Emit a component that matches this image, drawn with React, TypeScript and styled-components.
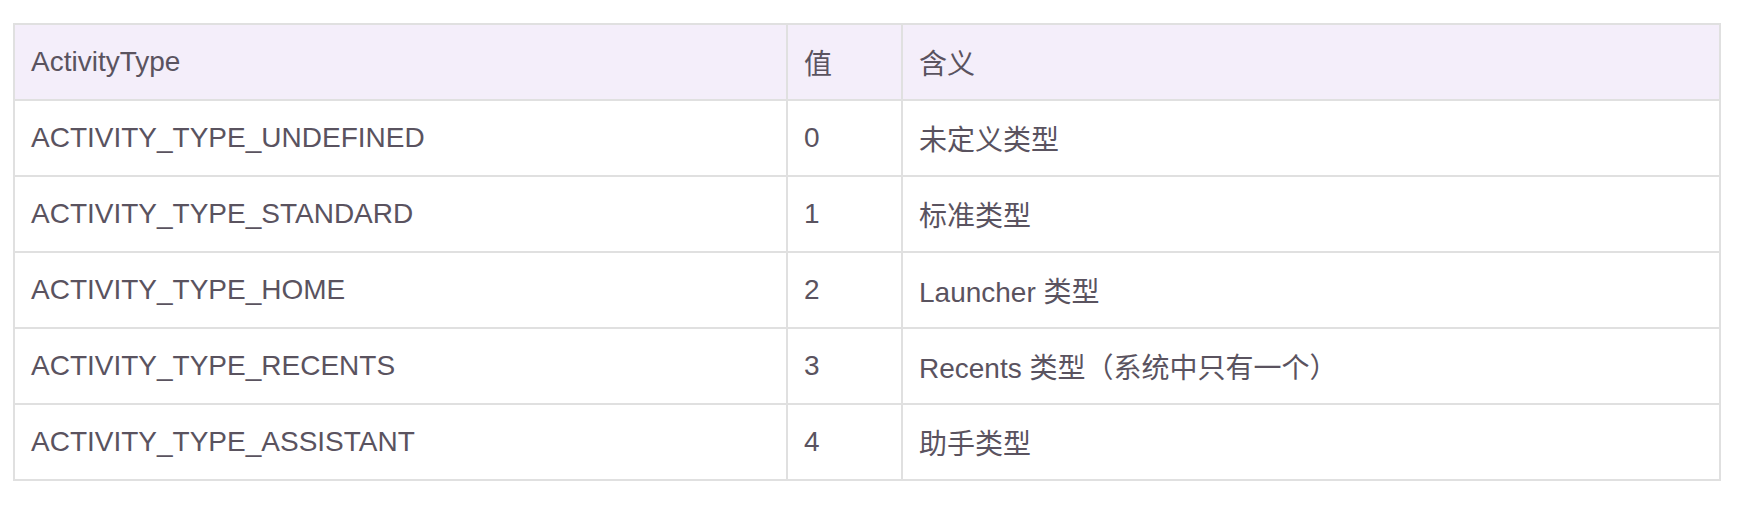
import React from "react";
import styled, { createGlobalStyle } from "styled-components";

const GlobalStyle = createGlobalStyle`
  html, body {
    margin: 0;
    padding: 0;
    background: #ffffff;
  }
  body {
    font-family: "Liberation Sans", "Noto Sans CJK SC", sans-serif;
  }
`;

const Page = styled.div`
  padding: 23px 0 0 13px;
`;

const Table = styled.div`
  display: grid;
  grid-template-columns: 771px 113px 816px;
  grid-auto-rows: 74px;
  gap: 2px;
  padding: 2px;
  width: 1704px;
  background: #e0e0e0;
`;

const Cell = styled.div<{ $head?: boolean }>`
  display: flex;
  align-items: center;
  padding: 0 16px;
  background: ${(p) => (p.$head ? "#f4eefa" : "#ffffff")};
  color: #5a535f;
  font-family: "Liberation Sans", "Noto Sans CJK SC", sans-serif;
  font-size: 28px;
  white-space: nowrap;
`;

const rows: [string, string, string][] = [
  ["ACTIVITY_TYPE_UNDEFINED", "0", "未定义类型"],
  ["ACTIVITY_TYPE_STANDARD", "1", "标准类型"],
  ["ACTIVITY_TYPE_HOME", "2", "Launcher 类型"],
  ["ACTIVITY_TYPE_RECENTS", "3", "Recents 类型（系统中只有一个）"],
  ["ACTIVITY_TYPE_ASSISTANT", "4", "助手类型"],
];

export default function App() {
  return (
    <>
      <GlobalStyle />
      <Page>
        <Table>
          <Cell $head>ActivityType</Cell>
          <Cell $head>值</Cell>
          <Cell $head>含义</Cell>
          {rows.map((r) => (
            <React.Fragment key={r[0]}>
              <Cell>{r[0]}</Cell>
              <Cell>{r[1]}</Cell>
              <Cell>{r[2]}</Cell>
            </React.Fragment>
          ))}
        </Table>
      </Page>
    </>
  );
}
